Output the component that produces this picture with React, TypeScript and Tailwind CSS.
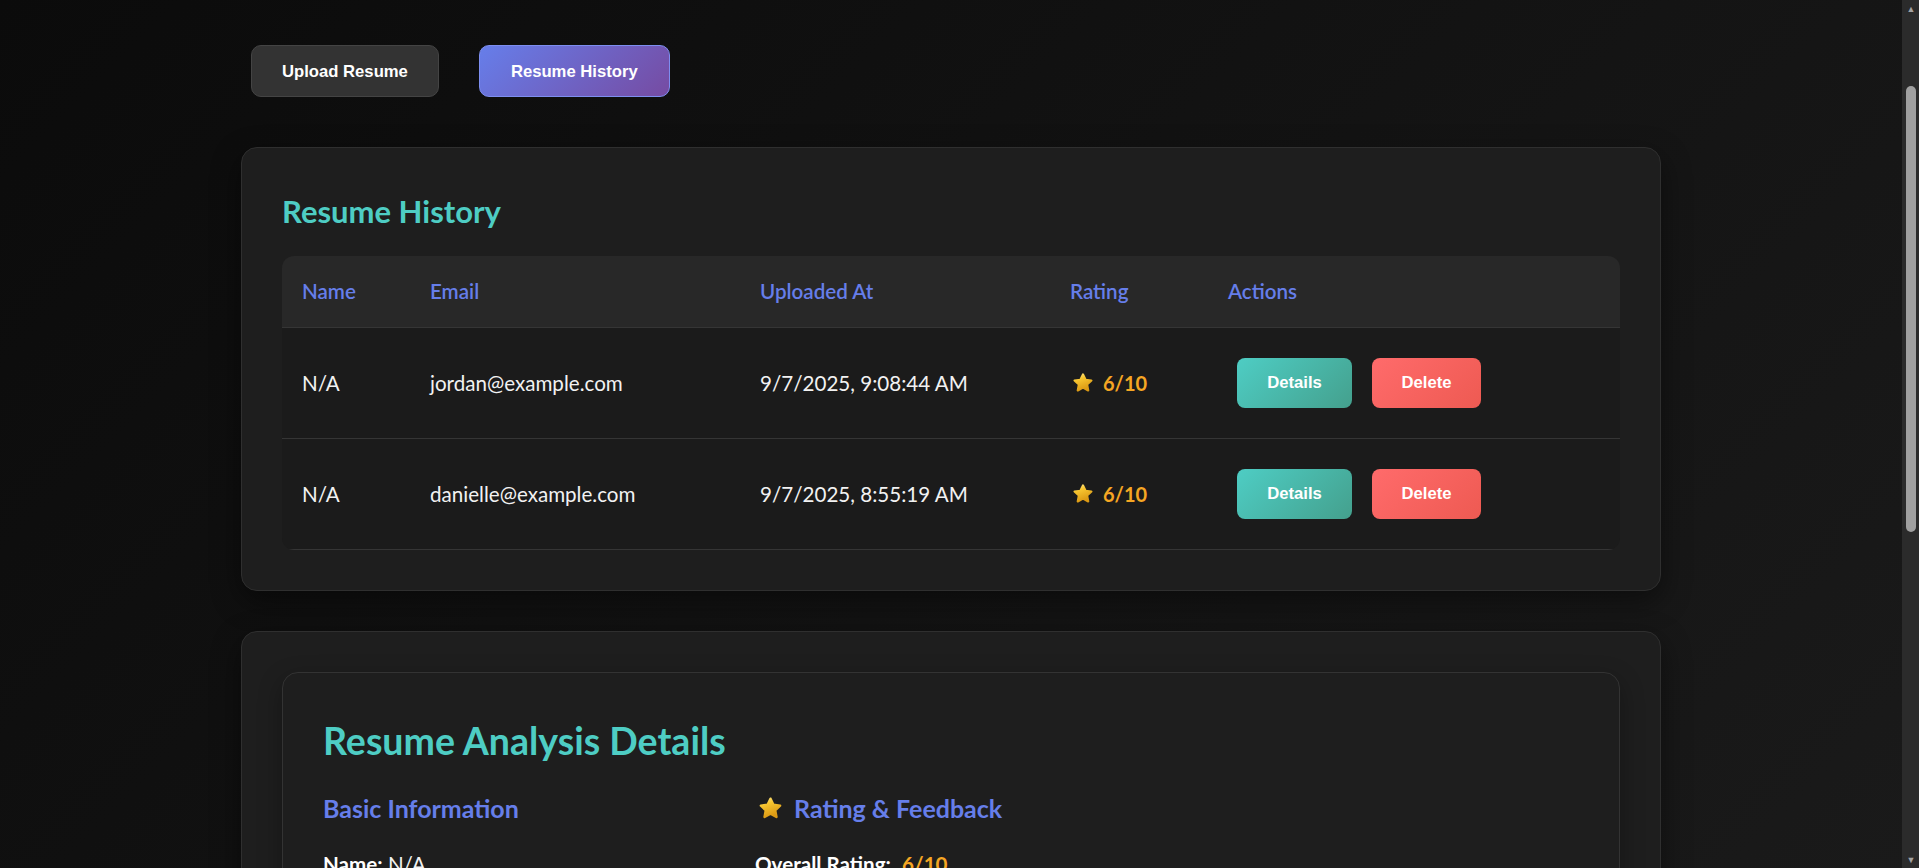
import { ReactNode } from "react";

const rows = [
  { name: "N/A", email: "jordan@example.com", uploadedAt: "9/7/2025, 9:08:44 AM", rating: 6 },
  { name: "N/A", email: "danielle@example.com", uploadedAt: "9/7/2025, 8:55:19 AM", rating: 6 },
];

const cols = "grid grid-cols-[128px_330px_310px_158px_1fr]";

function StarIcon({ size = 20 }: { size?: number }) {
  return (
    <svg width={size} height={size} viewBox="0 0 24 24" className="shrink-0">
      <defs>
        <linearGradient id="starGold" x1="0" y1="0" x2="0.4" y2="1">
          <stop offset="0" stopColor="#fde68a" />
          <stop offset="0.35" stopColor="#f8c630" />
          <stop offset="1" stopColor="#dc9a14" />
        </linearGradient>
      </defs>
      <path
        d="M12 2.6l2.8 5.9 6.4.8-4.7 4.4 1.2 6.4L12 17l-5.7 3.1 1.2-6.4-4.7-4.4 6.4-.8z"
        fill="url(#starGold)"
        stroke="url(#starGold)"
        strokeWidth="2.4"
        strokeLinejoin="round"
      />
    </svg>
  );
}

function Cell({ children }: { children: ReactNode }) {
  return <div className="flex items-center px-5">{children}</div>;
}

function Scrollbar() {
  return (
    <div className="flex w-[17px] shrink-0 flex-col bg-[#2b2b2b]">
      <div className="flex h-[17px] items-center justify-center pl-[1px] text-[9px] leading-none text-[#a3a3a3]">
        ▲
      </div>
      <div className="flex-1">
        <div className="ml-[4px] mt-[69px] h-[446px] w-[10px] rounded-full bg-[#a0a0a0]" />
      </div>
      <div className="flex h-[17px] items-center justify-center pl-[1px] text-[9px] leading-none text-[#a3a3a3]">
        ▼
      </div>
    </div>
  );
}

export default function App() {
  return (
    <div className="flex h-[868px] w-full overflow-hidden bg-[linear-gradient(135deg,#0b0b0b_0%,#1a1a1a_100%)] font-['Lato',sans-serif] text-white">
      <main className="min-w-0 flex-1 overflow-hidden">
        <div className="mx-auto max-w-[1500px] px-10 pt-[45px]">
          <div className="ml-[10px] flex gap-10">
            <button className="h-[52px] rounded-[10px] border border-[#444] bg-[#333] px-[30px] font-['Liberation_Sans',sans-serif] text-[16.67px] font-bold text-white">
              Upload Resume
            </button>
            <button className="h-[52px] rounded-[10px] border border-[#7d8ef0] bg-[linear-gradient(135deg,#667eea_0%,#764ba2_100%)] px-[31px] font-['Liberation_Sans',sans-serif] text-[16.67px] font-bold text-white">
              Resume History
            </button>
          </div>

          <section className="mt-[50px] rounded-2xl border border-[#2f2f2f] bg-[#1e1e1e] p-10 shadow-[0_10px_30px_rgba(0,0,0,0.45)]">
            <h2 className="mb-[26px] mt-[5px] text-[31px] font-bold leading-[1.2] text-[#4ecdc4]">
              Resume History
            </h2>
            <div className="overflow-hidden rounded-xl">
              <div className={`${cols} h-[72px] border-b border-[#353535] bg-[#282828] text-[20.6px] font-semibold leading-[1.2] text-[#667eea]`}>
                <Cell>Name</Cell>
                <Cell>Email</Cell>
                <Cell>Uploaded At</Cell>
                <Cell>Rating</Cell>
                <Cell>Actions</Cell>
              </div>
              {rows.map((r, i) => (
                <div
                  key={i}
                  className={`${cols} h-[111px] border-b border-[#353535] bg-[#1b1b1b] text-[20.6px] leading-[1.2] text-[#f2f2f2]`}
                >
                  <Cell>{r.name}</Cell>
                  <Cell>{r.email}</Cell>
                  <Cell>{r.uploadedAt}</Cell>
                  <Cell>
                    <span className="ml-[2px] flex items-center gap-[9px] text-[20px] font-bold text-[#f5a623]">
                      <StarIcon size={22} />
                      {r.rating}/10
                    </span>
                  </Cell>
                  <Cell>
                    <div className="ml-[9px] flex gap-5 font-['Liberation_Sans',sans-serif] text-[16.67px] font-bold">
                      <button className="h-[50px] w-[115px] rounded-[8px] bg-[linear-gradient(135deg,#4ecdc4_0%,#44a08d_100%)] text-white">
                        Details
                      </button>
                      <button className="h-[50px] w-[109px] rounded-[8px] bg-[linear-gradient(135deg,#ff6b6b_0%,#ee5a52_100%)] text-white">
                        Delete
                      </button>
                    </div>
                  </Cell>
                </div>
              ))}
            </div>
          </section>

          <section className="mt-10 rounded-2xl border border-[#2f2f2f] bg-[#1e1e1e] p-10 shadow-[0_10px_30px_rgba(0,0,0,0.45)]">
            <div className="rounded-2xl border border-[#333] bg-[#1e1e1e] p-10 shadow-[0_8px_24px_rgba(0,0,0,0.3)]">
              <h2 className="mt-[5px] text-[37.5px] font-bold leading-[1.2] text-[#4ecdc4]">
                Resume Analysis Details
              </h2>
              <div className="mt-[30px] grid grid-cols-3 gap-10">
                <div>
                  <h3 className="text-[25px] font-bold leading-[1.2] text-[#667eea]">
                    Basic Information
                  </h3>
                  <p className="mt-[29px] text-[20.6px] leading-[1.2] text-[#f2f2f2]">
                    <strong className="font-bold text-white">Name:</strong> N/A
                  </p>
                </div>
                <div>
                  <h3 className="flex items-center gap-[11px] text-[25px] font-bold leading-[1.2] text-[#667eea]">
                    <span className="ml-[3px]">
                      <StarIcon size={25} />
                    </span>
                    Rating &amp; Feedback
                  </h3>
                  <p className="mt-[29px] text-[20.6px] leading-[1.2] text-[#f2f2f2]">
                    <strong className="font-bold text-white">Overall Rating:</strong>{" "}
                    <span className="ml-[6px] font-bold text-[#f5a623]">6/10</span>
                  </p>
                </div>
                <div />
              </div>
            </div>
          </section>
        </div>
      </main>
      <Scrollbar />
    </div>
  );
}
